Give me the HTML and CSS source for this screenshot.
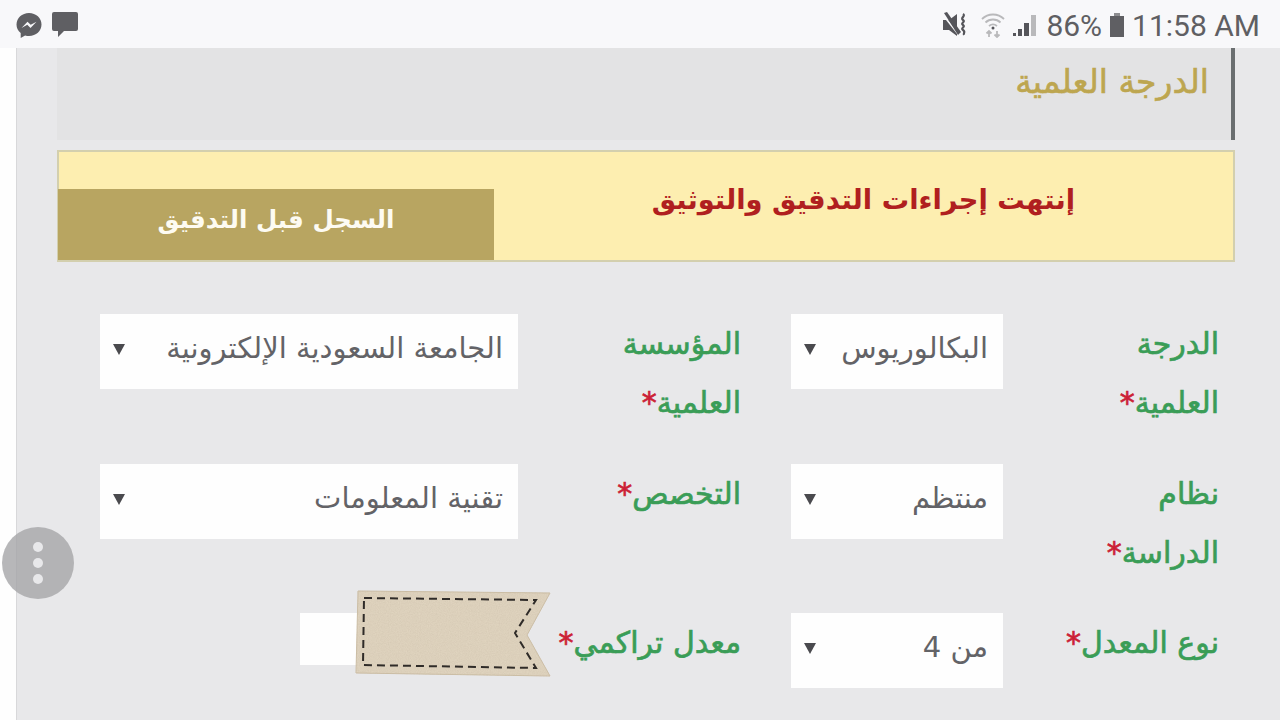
FILE: index.html
```html
<!DOCTYPE html>
<html lang="ar">
<head>
  <meta charset="UTF-8" />
  <title>الدرجة العلمية</title>
  <link rel="stylesheet" href="styles.css">
</head>
<body>
  <div class="status-bar">
    <div class="status-left">
      <svg class="icon-messenger" width="28" height="28" viewBox="0 0 28 28">
        <path d="M14 2C7 2 1.500 7 1.500 13.500c0 3.500 1.500 6.500 4.200 8.600V27l4.400-2.500c1.300.4 2.600.5 3.900.5 7 0 12.500-5 12.500-11.500S21 2 14 2z" fill="#5f5f63"/>
        <path d="M6.500 17l6-6.300 3.200 3.100 5.800-3.100-6 6.300-3.200-3.200z" fill="#f8f8fa"/>
      </svg>
      <svg class="icon-chat" width="28" height="28" viewBox="0 0 28 28">
        <path d="M3 1h22a2 2 0 0 1 2 2v15a2 2 0 0 1-2 2H13l-6 6v-6H3a2 2 0 0 1-2-2V3a2 2 0 0 1 2-2z" fill="#5f5f63"/>
      </svg>
    </div>
    <div class="status-right">
      <svg class="icon-mute" width="27" height="28" viewBox="0 0 27 28">
        <path d="M1 9h6l8-6v22l-8-6H1z" fill="#55555a"/>
        <path d="M2 5l15 19" stroke="#f8f8fa" stroke-width="2"/>
        <path d="M2 2l3-1 14 20-3 3z" fill="#55555a"/>
        <path d="M21 3c3 2-3 4 0 6s-3 3 0 5 -3 3 0 5 0 3 1 5" fill="none" stroke="#55555a" stroke-width="2.200"/>
      </svg>
      <svg class="icon-wifi" width="24" height="26" viewBox="0 0 24 26">
        <path d="M1 7c6-6 16-6 22 0M4.500 10.500c4-4 11-4 15 0M8 14c2.500-2 5.500-2 8 0" fill="none" stroke="#b9b9bb" stroke-width="1.800"/>
        <circle cx="12" cy="16" r="1.500" fill="#55555a"/>
        <path d="M8 25v-5M5.500 21.500L8 19l2.500 2.500M16 19v5M13.500 22.500L16 25l2.500-2.500" fill="none" stroke="#b9b9bb" stroke-width="1.800"/>
      </svg>
      <svg class="icon-signal" width="26" height="26" viewBox="0 0 26 26">
        <path d="M1 21h3v3H1zM6 17h4v7H6zM12 11h5v13h-5z" fill="#55555a"/>
        <path d="M19 3h5v21h-5z" fill="#b9b9bb"/>
      </svg>
      <span class="battery-text">86%</span>
      <svg class="icon-battery" width="16" height="26" viewBox="0 0 16 26">
        <path d="M5 1h6v3H5z" fill="#8d8d90"/>
        <path d="M1 4h14v21H1z" fill="#5f5f63"/>
      </svg>
      <span class="clock">11:58 AM</span>
    </div>
  </div>

  <div class="page" dir="rtl">
    <div class="section-head">
      <h2 class="section-title">الدرجة العلمية</h2>
    </div>

    <div class="notice">
      <div class="notice-text">إنتهت إجراءات التدقيق والتوثيق</div>
      <div class="notice-btn">السجل قبل التدقيق</div>
    </div>

    <div class="form">
      <label class="field-label">الدرجة العلمية<span class="req">*</span></label>
      <div class="select">البكالوريوس</div>
      <label class="field-label">المؤسسة العلمية<span class="req">*</span></label>
      <div class="select">الجامعة السعودية الإلكترونية</div>

      <label class="field-label">نظام الدراسة<span class="req">*</span></label>
      <div class="select">منتظم</div>
      <label class="field-label">التخصص<span class="req">*</span></label>
      <div class="select">تقنية المعلومات</div>

      <label class="field-label one-line">نوع المعدل<span class="req">*</span></label>
      <div class="select">من 4</div>
      <label class="field-label one-line">معدل تراكمي<span class="req">*</span></label>
      <div class="gpa-input"></div>
    </div>
  </div>

  <div class="float-btn"><span></span><span></span><span></span></div>

  <svg class="tag" width="198" height="90" viewBox="0 0 198 90">
    <filter id="grain">
      <feTurbulence type="fractalNoise" baseFrequency="0.9" numOctaves="2" result="noise"/>
      <feColorMatrix in="noise" type="matrix" values="0 0 0 0 0.55  0 0 0 0 0.47  0 0 0 0 0.36  0 0 0 0.5 -0.1" result="speck"/>
      <feComposite in="speck" in2="SourceGraphic" operator="in" result="clipped"/>
      <feMerge>
        <feMergeNode in="SourceGraphic"/>
        <feMergeNode in="clipped"/>
      </feMerge>
    </filter>
    <path d="M4 2L196 4 173 46 196 87 2 84z" fill="#e0d4bf" stroke="#cdbfa6" stroke-width="1" filter="url(#grain)"/>
    <path d="M10 9L182 11 161 44 182 79 9 76z" fill="none" stroke="#2f2b28" stroke-width="2" stroke-dasharray="8 5"/>
  </svg>
</body>
</html>
```

FILE: styles.css
```css
* {
  box-sizing: border-box;
  margin: 0;
  padding: 0;
}

html, body {
  height: 720px;
  overflow: hidden;
}

body {
  position: relative;
  font-family: "DejaVu Sans", sans-serif;
  background: #fefefe;
}

.status-bar {
  display: flex;
  justify-content: space-between;
  align-items: center;
  height: 48px;
  padding: 2px 20px 0 15px;
  background: #f8f8fa;
  color: #5f5f63;
  font-family: Roboto, sans-serif;
}

.status-left {
  display: flex;
  align-items: center;
  gap: 8px;
}

.status-right {
  display: flex;
  align-items: center;
  gap: 7px;
}

.battery-text {
  font-size: 30px;
  margin-left: 1px;
}

.icon-wifi {
  margin-left: 5px;
}

.clock {
  font-size: 30px;
}

.page {
  height: 672px;
  margin-left: 16px;
  padding: 0 45px 0 40px;
  background: #e8e8ea;
  border-left: 1px solid #d8d8da;
}

.section-head {
  height: 92px;
  padding: 14px 22px 0 0;
  background: #e3e3e4;
  border-right: 4px solid #6a6e70;
}

.section-title {
  font-size: 33px;
  font-weight: normal;
  color: #bda650;
  -webkit-text-stroke: 0.6px #bda650;
}

.notice {
  display: flex;
  height: 112px;
  margin-top: 10px;
  background: #fdeeb0;
  border: 2px solid #d3cfae;
}

.notice-text {
  flex: 1;
  padding: 32px 158px 0 0;
  font-size: 27.300px;
  font-weight: bold;
  color: #b01f1f;
  white-space: nowrap;
}

.notice-btn {
  align-self: flex-end;
  width: 436px;
  height: 71px;
  margin-left: -1px;
  padding-top: 16px;
  background: #b8a561;
  color: #fdfbf2;
  font-size: 24.500px;
  font-weight: bold;
  text-align: center;
}

.form {
  display: grid;
  grid-template-columns: 216px 212px 273px 418px;
  grid-template-rows: 149.500px 149.500px auto;
  margin-top: 52px;
  padding-right: 16px;
}

.field-label {
  padding-left: 60px;
  color: #3a9d57;
  font-size: 30px;
  -webkit-text-stroke: 0.7px #3a9d57;
  line-height: 59px;
}

.field-label:nth-of-type(even) {
  padding-left: 40px;
  padding-right: 50px;
}

.one-line {
  padding-left: 0;
  white-space: nowrap;
}

.one-line:nth-of-type(even) {
  padding-left: 0;
}

.req {
  color: #cc1f36;
  -webkit-text-stroke: 0.7px #cc1f36;
}

.select {
  position: relative;
  height: 75px;
  padding-right: 15px;
  background: #fefefe;
  color: #636367;
  font-size: 29px;
  line-height: 68px;
  white-space: nowrap;
}

.select::after {
  content: "";
  position: absolute;
  left: 13px;
  top: 30px;
  border-top: 11px solid #4a4a4e;
  border-left: 6px solid transparent;
  border-right: 6px solid transparent;
}

.gpa-input {
  width: 218px;
  height: 52px;
  background: #fefefe;
}

.float-btn {
  position: absolute;
  left: 2px;
  top: 527px;
  display: flex;
  flex-direction: column;
  align-items: center;
  justify-content: center;
  gap: 6px;
  width: 72px;
  height: 72px;
  border-radius: 50%;
  background: rgba(165, 165, 168, 0.8);
}

.float-btn span {
  width: 10px;
  height: 10px;
  border-radius: 50%;
  background: #e8e8ea;
}

.tag {
  position: absolute;
  left: 354px;
  top: 589px;
}
```
